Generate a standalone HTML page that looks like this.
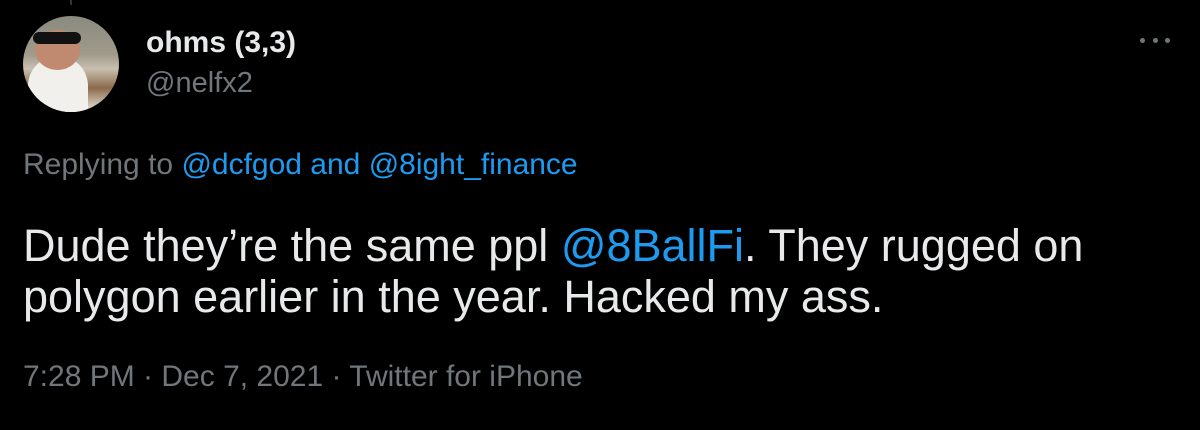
<!DOCTYPE html>
<html><head><style>
body{margin:0;background:#000;width:1200px;height:430px;overflow:hidden;font-family:"Liberation Sans",Arial,sans-serif;position:relative}
.t{position:absolute;white-space:nowrap;line-height:30px}
.b{color:#1d9bf0}
</style></head><body>
<div style="position:absolute;left:70px;top:0;width:2px;height:5px;background:#333"></div>
<div style="position:absolute;left:23px;top:16px;width:96px;height:96px;border-radius:50%;overflow:hidden;background:linear-gradient(180deg,#8a8a80 0%,#a09a8a 40%,#c8c0b0 55%,#8a6a4a 75%,#eeeae4 100%)">
<div style="position:absolute;left:5px;top:40px;width:60px;height:70px;background:#f2f0ec;border-radius:30px 30px 0 0"></div>
<div style="position:absolute;left:12px;top:14px;width:45px;height:40px;background:#c08a70;border-radius:50%"></div>
<div style="position:absolute;left:10px;top:16px;width:48px;height:12px;background:#111;border-radius:6px"></div>
</div>
<div class="t" style="left:146px;top:28px;font-size:30px;font-weight:bold;color:#e7e9ea">ohms (3,3)</div>
<div class="t" style="left:146px;top:68px;font-size:29px;color:#71767b">@nelfx2</div>
<div style="position:absolute;left:1140px;top:38px;width:30px;display:flex;justify-content:space-between">
<span style="width:5px;height:5px;border-radius:50%;background:#71767b"></span><span style="width:5px;height:5px;border-radius:50%;background:#71767b"></span><span style="width:5px;height:5px;border-radius:50%;background:#71767b"></span></div>
<div class="t" style="left:23px;top:150px;font-size:30px;color:#71767b">Replying to <span class="b">@dcfgod and @8ight_finance</span></div>
<div class="t" style="left:23px;top:220px;font-size:45px;color:#e7e9ea;line-height:51px">Dude they’re the same ppl <span class="b">@8BallFi</span>. They rugged on<br>polygon earlier in the year. Hacked my ass.</div>
<div class="t" style="left:23px;top:362px;font-size:30px;color:#71767b">7:28 PM · Dec 7, 2021 · Twitter for iPhone</div>
</body></html>
